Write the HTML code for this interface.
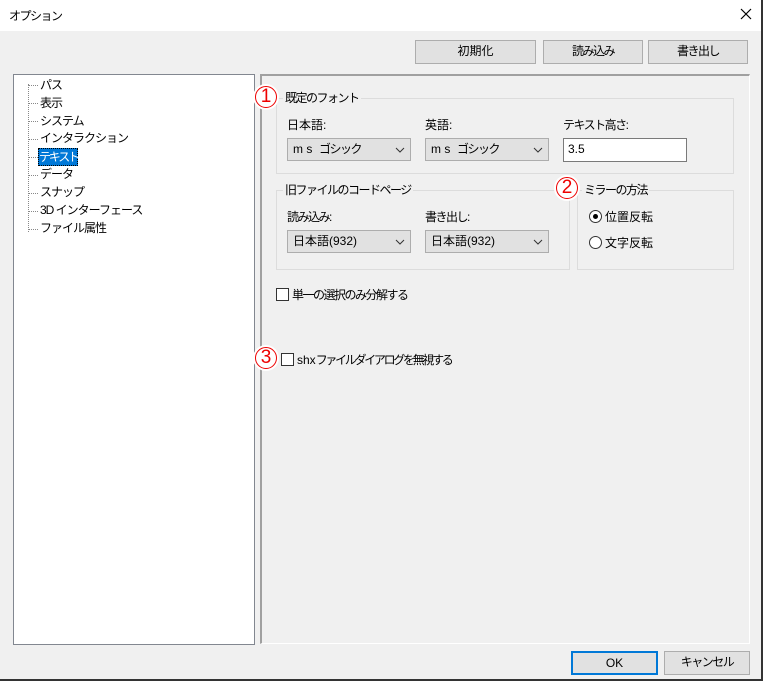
<!DOCTYPE html>
<html><head><meta charset="utf-8"><style>
*{box-sizing:border-box}
body{margin:0;width:763px;height:681px;background:#f0f0f0;font-family:"Liberation Sans","Noto Sans CJK JP",sans-serif;font-size:12px;color:#000;position:relative;overflow:hidden}
.a{position:absolute;white-space:nowrap}
.k{letter-spacing:-1.5px}
.btn{position:absolute;background:#e1e1e1;border:1px solid #adadad;text-align:center;line-height:21px;font-size:12px}
.grp{position:absolute;border:1px solid #dcdcdc}
.gl{position:absolute;background:#f0f0f0;padding:0 2px;line-height:14px;letter-spacing:-1.5px;white-space:nowrap}
.cb{position:absolute;background:#e1e1e1;border:1px solid #adadad;height:23px;line-height:21px;padding-left:5px}
.cb svg{position:absolute;right:5px;top:8px}
.num{position:absolute;width:22px;height:22px;border-radius:50%;border:1.5px solid #e00;background:#fff;color:#e00;font-size:19px;line-height:19px;text-align:center;box-shadow:0 0 0 2px #fff}
.chk{position:absolute;width:13px;height:13px;border:1px solid #333;background:#fff}
.rad{position:absolute;width:13px;height:13px;border:1px solid #333;border-radius:50%;background:#fff}
.ti{position:absolute;left:40px;line-height:16px;letter-spacing:-1px;white-space:nowrap}
.dh{position:absolute;left:29px;width:9px;border-top:1px dotted #888}
</style></head><body>
<div class="a" style="left:0;top:0;width:763px;height:31px;background:#fff"></div>
<div class="a k" style="left:9px;top:7px">オプション</div>
<svg class="a" style="left:740px;top:8px" width="12" height="12"><path d="M1 1L11 11M11 1L1 11" stroke="#000" stroke-width="1.2"/></svg>
<div class="a" style="left:761px;top:0;width:2px;height:681px;background:#333"></div>
<div class="a" style="left:0;top:679px;width:763px;height:2px;background:#333"></div>

<div class="btn" style="left:415px;top:40px;width:121px;height:24px">初期化</div>
<div class="btn k" style="left:543px;top:40px;width:100px;height:24px">読み込み</div>
<div class="btn k" style="left:648px;top:40px;width:100px;height:24px">書き出し</div>

<div class="a" style="left:13px;top:74px;width:242px;height:571px;background:#fff;border:1px solid #828790"></div>
<div class="a" style="left:28px;top:84px;height:148px;border-left:1px dotted #888"></div>
<div class="dh" style="top:85px"></div><div class="ti" style="top:77px">パス</div>
<div class="dh" style="top:103px"></div><div class="ti" style="top:95px">表示</div>
<div class="dh" style="top:121px"></div><div class="ti" style="top:113px">システム</div>
<div class="dh" style="top:139px"></div><div class="ti" style="top:130px">インタラクション</div>
<div class="dh" style="top:157px"></div>
<div class="a" style="left:38px;top:148px;width:40px;height:18px;background:#0078d7;border:1px dotted #000"></div>
<div class="ti" style="top:149px;left:39px;color:#fff;letter-spacing:-2.2px">テキスト</div>
<div class="dh" style="top:175px"></div><div class="ti" style="top:166px">データ</div>
<div class="dh" style="top:193px"></div><div class="ti" style="top:184px">スナップ</div>
<div class="dh" style="top:211px"></div><div class="ti" style="top:202px">3D インターフェース</div>
<div class="dh" style="top:229px"></div><div class="ti" style="top:220px">ファイル属性</div>

<div class="a" style="left:260px;top:74px;width:490px;height:570px;border-top:2px solid #a0a0a0;border-left:2px solid #a0a0a0;border-right:1px solid #fff;border-bottom:1px solid #fff"></div>

<div class="grp" style="left:276px;top:98px;width:458px;height:76px"></div>
<div class="gl" style="left:283px;top:91px">既定のフォント</div>
<div class="a" style="left:287px;top:116px">日本語:</div>
<div class="a" style="left:425px;top:116px">英語:</div>
<div class="a k" style="left:563px;top:116px">テキスト高さ:</div>
<div class="cb" style="left:287px;top:138px;width:124px">m s &nbsp;<span class="k">ゴシック</span><svg width="10" height="6"><path d="M1 1l4 4 4-4" fill="none" stroke="#333"/></svg></div>
<div class="cb" style="left:425px;top:138px;width:124px">m s &nbsp;<span class="k">ゴシック</span><svg width="10" height="6"><path d="M1 1l4 4 4-4" fill="none" stroke="#333"/></svg></div>
<div class="a" style="left:563px;top:138px;width:124px;height:24px;background:#fff;border:1px solid #7a7a7a;padding-left:4px;line-height:20px">3.5</div>

<div class="grp" style="left:276px;top:190px;width:294px;height:80px"></div>
<div class="gl" style="left:283px;top:183px">旧ファイルのコードページ</div>
<div class="a k" style="left:287px;top:208px">読み込み:</div>
<div class="a k" style="left:425px;top:208px">書き出し:</div>
<div class="cb" style="left:287px;top:230px;width:124px">日本語(932)<svg width="10" height="6"><path d="M1 1l4 4 4-4" fill="none" stroke="#333"/></svg></div>
<div class="cb" style="left:425px;top:230px;width:124px">日本語(932)<svg width="10" height="6"><path d="M1 1l4 4 4-4" fill="none" stroke="#333"/></svg></div>

<div class="grp" style="left:577px;top:190px;width:157px;height:80px"></div>
<div class="gl" style="left:582px;top:183px">ミラーの方法</div>
<div class="rad" style="left:589px;top:210px"><div class="a" style="left:3px;top:3px;width:5px;height:5px;border-radius:50%;background:#000"></div></div>
<div class="a" style="left:605px;top:208px">位置反転</div>
<div class="rad" style="left:589px;top:236px"></div>
<div class="a" style="left:605px;top:234px">文字反転</div>

<div class="chk" style="left:276px;top:288px"></div>
<div class="a k" style="left:292px;top:286px">単一の選択のみ分解する</div>
<div class="chk" style="left:281px;top:353px"></div>
<div class="a" style="left:297px;top:351px">shx<span style="letter-spacing:-2.3px">ファイルダイアログを無視する</span></div>

<div class="num" style="left:255px;top:86px">1</div>
<div class="num" style="left:556px;top:177px">2</div>
<div class="num" style="left:255px;top:347px">3</div>

<div class="btn" style="left:571px;top:651px;width:87px;height:24px;border:2px solid #0078d7;line-height:20px">OK</div>
<div class="btn k" style="left:664px;top:651px;width:86px;height:24px">キャンセル</div>
</body></html>
